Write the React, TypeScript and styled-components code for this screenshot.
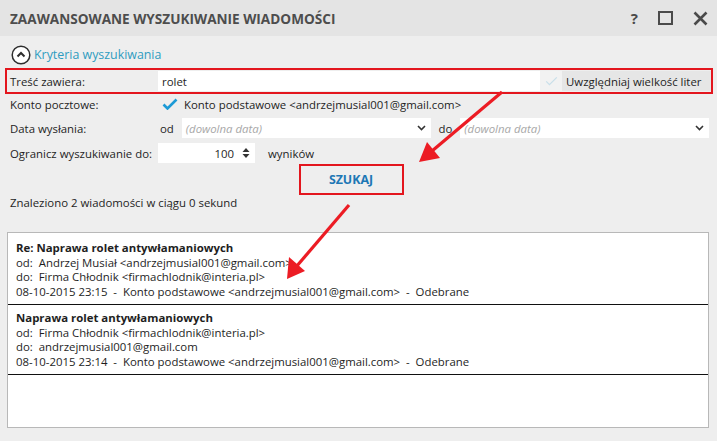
import styled, { createGlobalStyle } from 'styled-components';

const GlobalStyle = createGlobalStyle`
  html, body {
    margin: 0;
    padding: 0;
    background: #eeeeee;
  }
  body {
    font-family: 'Open Sans', 'Noto Sans', sans-serif;
    font-size: 11.4px;
    color: #1e1e1e;
  }
`;

type Message = {
  subject: string;
  from: string;
  to: string;
  date: string;
};

const messages: Message[] = [
  {
    subject: 'Re: Naprawa rolet antywłamaniowych',
    from: 'Andrzej Musiał <andrzejmusial001@gmail.com>',
    to: 'Firma Chłodnik <firmachlodnik@interia.pl>',
    date: '08-10-2015 23:15',
  },
  {
    subject: 'Naprawa rolet antywłamaniowych',
    from: 'Firma Chłodnik <firmachlodnik@interia.pl>',
    to: 'andrzejmusial001@gmail.com',
    date: '08-10-2015 23:14',
  },
];

const ACCOUNT = 'Konto podstawowe <andrzejmusial001@gmail.com>';

function CheckMark({ faint }: { faint?: boolean }) {
  return (
    <svg width={faint ? 13 : 16} height="12" viewBox="0 0 16 12" aria-hidden="true">
      <path
        d="M1.5 6.5 L5.5 10.5 L14.5 1.5"
        fill="none"
        stroke={faint ? '#c9dfe9' : '#1c9ad6'}
        strokeWidth={faint ? 1.6 : 2.6}
      />
    </svg>
  );
}

function Chevron() {
  return (
    <svg width="9" height="6" viewBox="0 0 9 6" aria-hidden="true">
      <path d="M1 1 L4.5 4.5 L8 1" fill="none" stroke="#333" strokeWidth="1.6" />
    </svg>
  );
}

function DateField() {
  return (
    <Field $grow>
      <Placeholder>(dowolna data)</Placeholder>
      <Chevron />
    </Field>
  );
}

export default function App() {
  return (
    <>
      <GlobalStyle />
      <Window>
        <TitleBar>
          <Title>Zaawansowane wyszukiwanie wiadomości</Title>
          <TitleButtons>
            <HelpGlyph>?</HelpGlyph>
            <MaxBox />
            <svg width="15" height="15" viewBox="0 0 15 15" aria-hidden="true">
              <path d="M1.5 1.5 L13.5 13.5 M13.5 1.5 L1.5 13.5" stroke="#4a4a4a" strokeWidth="2.6" />
            </svg>
          </TitleButtons>
        </TitleBar>

        <Body>
          <SectionToggle>
            <svg width="20" height="20" viewBox="0 0 20 20" aria-hidden="true">
              <circle cx="10" cy="10" r="8.8" fill="#fff" stroke="#2d2d2d" strokeWidth="1.5" />
              <path d="M6.5 11.5 L10 8 L13.5 11.5" fill="none" stroke="#2d2d2d" strokeWidth="2" />
            </svg>
            Kryteria wyszukiwania
          </SectionToggle>

          <Highlight>
            <FormRow $gap={0} $inBox>
              <Label>Treść zawiera:</Label>
              <Field $grow>rolet</Field>
              <CaseOption>
                <CheckBox>
                  <CheckMark faint />
                </CheckBox>
                Uwzględniaj wielkość liter
              </CaseOption>
            </FormRow>
          </Highlight>

          <FormRow $gap={0}>
            <Label>Konto pocztowe:</Label>
            <Inline $indent={4}>
              <CheckMark />
              {ACCOUNT}
            </Inline>
          </FormRow>

          <FormRow $gap={4}>
            <Label>Data wysłania:</Label>
            <DateRange>
              <RangeWord>od</RangeWord>
              <DateField />
              <RangeWord>do</RangeWord>
              <DateField />
            </DateRange>
          </FormRow>

          <FormRow $gap={5}>
            <Label>Ogranicz wyszukiwanie do:</Label>
            <Inline $indent={0}>
              <Field $width={97} $align="right">
                100
                <Spinner>
                  <svg width="8" height="12" viewBox="0 0 8 12" aria-hidden="true">
                    <path d="M0.5 5 L4 1 L7.5 5 Z M0.5 7 L4 11 L7.5 7 Z" fill="#333" />
                  </svg>
                </Spinner>
              </Field>
              <Suffix>wyników</Suffix>
            </Inline>
          </FormRow>

          <ButtonRow>
            <SearchButton>SZUKAJ</SearchButton>
          </ButtonRow>

          <Status>Znaleziono 2 wiadomości w ciągu 0 sekund</Status>

          <ResultList>
            {messages.map((m) => (
              <ResultItem key={m.date}>
                <Subject>{m.subject}</Subject>
                <Line>{`od:  ${m.from}`}</Line>
                <Line>{`do:  ${m.to}`}</Line>
                <Line>{`${m.date}  -  ${ACCOUNT}  -  Odebrane`}</Line>
              </ResultItem>
            ))}
          </ResultList>
        </Body>

        <Overlay width="717" height="441" viewBox="0 0 717 441" aria-hidden="true">
          <line x1="502" y1="92" x2="432" y2="151" stroke="#ec1c24" strokeWidth="3.2" />
          <polygon points="419,162 427,142 440,158" fill="#ec1c24" />
          <line x1="349" y1="205" x2="296" y2="267" stroke="#ec1c24" strokeWidth="3.2" />
          <polygon points="287,279 289,257 305,271" fill="#ec1c24" />
        </Overlay>
      </Window>
    </>
  );
}

const Window = styled.div`
  position: relative;
  width: 717px;
  height: 441px;
  overflow: hidden;
  background: #eeeeee;
`;

const TitleBar = styled.div`
  display: flex;
  align-items: center;
  justify-content: space-between;
  height: 36px;
  padding: 0 9px 0 10px;
  background: #e4e4e4;
`;

const Title = styled.div`
  font-weight: 700;
  font-size: 13.6px;
  text-transform: uppercase;
  color: #4d4d4d;
`;

const TitleButtons = styled.div`
  display: flex;
  align-items: center;
  gap: 20px;
`;

const HelpGlyph = styled.span`
  font-weight: 700;
  font-size: 15px;
  color: #4a4a4a;
`;

const MaxBox = styled.span`
  width: 11px;
  height: 10px;
  border: 2.5px solid #4a4a4a;
`;

const Body = styled.div`
  display: flex;
  flex-direction: column;
  padding: 0 8px 0 5px;
`;

const SectionToggle = styled.div`
  display: flex;
  align-items: center;
  gap: 3px;
  height: 27px;
  padding: 5px 0 0 6px;
  font-size: 12.4px;
  color: #2f9cc0;
`;

const Highlight = styled.div`
  border: 2px solid #e3161e;
  margin-right: -4px;
`;

const FormRow = styled.div<{ $gap: number; $inBox?: boolean }>`
  display: flex;
  align-items: center;
  height: 20px;
  margin: ${(p) => (p.$inBox ? '1px 0' : `${p.$gap}px 0 0`)};
  padding-left: ${(p) => (p.$inBox ? 3 : 5)}px;
`;

const Label = styled.div`
  width: 148px;
  flex-shrink: 0;
  white-space: nowrap;
`;

const Field = styled.div<{ $grow?: boolean; $width?: number; $align?: 'left' | 'right' }>`
  display: flex;
  align-items: center;
  justify-content: ${(p) => (p.$align === 'right' ? 'flex-end' : 'space-between')};
  gap: 6px;
  box-sizing: border-box;
  height: 20px;
  padding: 0 5px 0 4px;
  background: #ffffff;
  ${(p) => (p.$grow ? 'flex: 1;' : '')}
  ${(p) => (p.$width ? `width: ${p.$width}px;` : '')}
`;

const CaseOption = styled.div`
  display: flex;
  align-items: center;
  gap: 4px;
  width: 171px;
  height: 20px;
  box-sizing: border-box;
  background: #e6e6e6;
  white-space: nowrap;
`;

const CheckBox = styled.span`
  display: flex;
  align-items: center;
  justify-content: center;
  width: 22px;
  height: 20px;
  background: #f2f2f2;
`;

const Inline = styled.div<{ $indent: number }>`
  display: flex;
  align-items: center;
  gap: 6px;
  padding-left: ${(p) => p.$indent}px;
  white-space: nowrap;
`;

const DateRange = styled.div`
  display: flex;
  align-items: center;
  flex: 1;
  gap: 6px;
`;

const RangeWord = styled.span`
  padding: 0 2px;
`;

const Placeholder = styled.span`
  font-style: italic;
  color: #a8a8a8;
`;

const Spinner = styled.span`
  display: flex;
  margin-left: 2px;
`;

const Suffix = styled.span`
  margin-left: 7px;
`;

const ButtonRow = styled.div`
  display: flex;
  justify-content: center;
  margin-top: 1px;
  padding-right: 12px;
`;

const SearchButton = styled.button`
  width: 105px;
  height: 31px;
  border: 2px solid #e3161e;
  background: transparent;
  font-family: inherit;
  font-weight: 700;
  font-size: 12.4px;
  color: #1d77b5;
  padding: 0;
`;

const Status = styled.div`
  padding-left: 5px;
  line-height: 16px;
`;

const ResultList = styled.div`
  margin: 21px 0 0 2px;
  height: 196px;
  padding-top: 2px;
  background: #ffffff;
  border: 1px solid #b8b8b8;
  box-sizing: border-box;
`;

const ResultItem = styled.div`
  padding: 6px 0 5px 8px;
  border-bottom: 1px solid #111;
`;

const Subject = styled.div`
  font-weight: 700;
  line-height: 14.5px;
`;

const Line = styled.div`
  line-height: 14.5px;
  white-space: pre;
`;

const Overlay = styled.svg`
  position: absolute;
  inset: 0;
  pointer-events: none;
`;
